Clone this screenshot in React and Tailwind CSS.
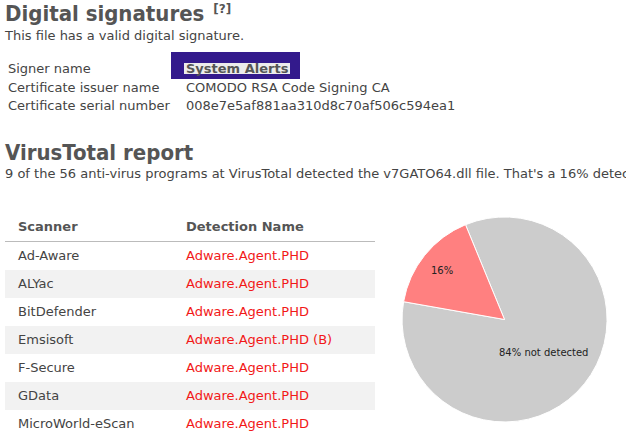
export default function App() {
  const rows = [
    ['Ad-Aware', 'Adware.Agent.PHD'],
    ['ALYac', 'Adware.Agent.PHD'],
    ['BitDefender', 'Adware.Agent.PHD'],
    ['Emsisoft', 'Adware.Agent.PHD (B)'],
    ['F-Secure', 'Adware.Agent.PHD'],
    ['GData', 'Adware.Agent.PHD'],
    ['MicroWorld-eScan', 'Adware.Agent.PHD'],
  ];

  return (
    <div className="relative w-[626px] h-[434px] overflow-hidden bg-white px-[5px] text-[13px] text-[#444] font-['DejaVu_Sans',Verdana,sans-serif]">
      <h2 className="pt-[2px] text-[22px] leading-[24px] font-bold text-[#555] whitespace-nowrap font-['DejaVu_Sans_Condensed','DejaVu_Sans',sans-serif]">
        Digital signatures<span className="ml-[9px] text-[12px] leading-none align-[8px] font-['DejaVu_Sans',sans-serif]">[?]</span>
      </h2>
      <p className="mt-[3px] leading-[14px]">This file has a valid digital signature.</p>

      <div className="mt-[17px]">
        <div className="flex leading-[18px]">
          <div className="w-[181px] pl-[3px]">Signer name</div>
          <div className="relative">
            <div className="absolute left-[-15px] top-[-8px] w-[129px] h-[27px] bg-[#331a8c] z-10" />
            <span className="relative z-20 inline-block -ml-[2px] px-[2px] leading-[11px] bg-[#ececec] font-bold text-[#555]">System Alerts</span>
          </div>
        </div>
        <div className="flex leading-[19px]">
          <div className="w-[181px] pl-[3px]">Certificate issuer name</div>
          <div>COMODO RSA Code Signing CA</div>
        </div>
        <div className="flex leading-[18px]">
          <div className="w-[181px] pl-[3px]">Certificate serial number</div>
          <div>008e7e5af881aa310d8c70af506c594ea1</div>
        </div>
      </div>

      <h2 className="mt-[26px] text-[22px] leading-[24px] font-bold text-[#555] font-['DejaVu_Sans_Condensed','DejaVu_Sans',sans-serif]">VirusTotal report</h2>
      <p className="mt-[2px] leading-[14px] whitespace-nowrap">
        9 of the 56 anti-virus programs at VirusTotal detected the v7GATO64.dll file. That's a 16% detection rate.
      </p>

      <div className="mt-[21px] flex">
        <div className="w-[370px] shrink-0 mt-[11px]">
          <div className="flex h-[29px] leading-[28px] border-b border-[#bbb] font-bold text-[#555]">
            <div className="w-[181px] pl-[13px]">Scanner</div>
            <div>Detection Name</div>
          </div>
          {rows.map(([scanner, name], i) => (
            <div key={scanner} className={`flex h-[28px] leading-[28px] ${i % 2 === 1 ? 'bg-[#f2f2f2]' : 'bg-white'}`}>
              <div className="w-[181px] pl-[13px]">{scanner}</div>
              <div className="text-[#f21818]">{name}</div>
            </div>
          ))}
        </div>
        <svg width="251" height="234" className="shrink-0 -mt-[1px]">
          <path d="M129.5 118.5 L28.6 100.7 A102.5 102.5 0 1 0 90.5 23.7 Z" fill="#cccccc" stroke="#ffffff" strokeWidth="1" />
          <path d="M129.5 118.5 L90.5 23.7 A102.5 102.5 0 0 0 28.6 100.7 Z" fill="#ff8080" stroke="#ffffff" strokeWidth="1" />
          <text x="56" y="72.7" fontSize="10" fill="#222" fontFamily="DejaVu Sans, sans-serif">16%</text>
          <text x="124" y="155" fontSize="10" fill="#222" fontFamily="DejaVu Sans, sans-serif">84% not detected</text>
        </svg>
      </div>
    </div>
  );
}
